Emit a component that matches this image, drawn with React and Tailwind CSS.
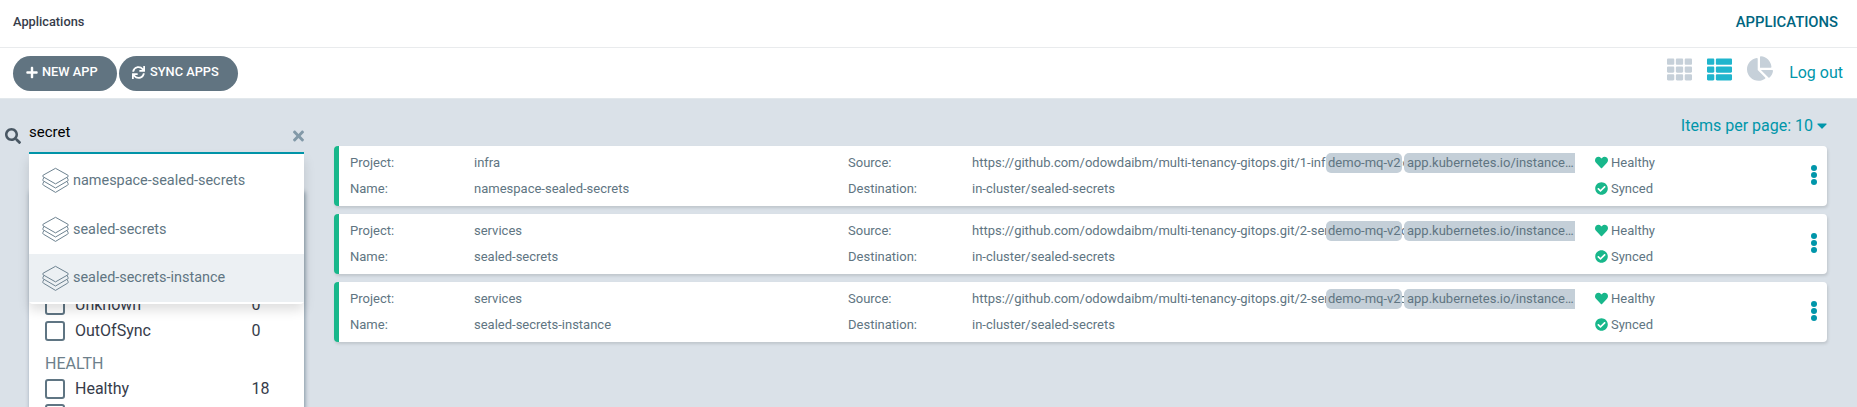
import React from "react";
import {
  FaPlus,
  FaSync,
  FaTh,
  FaThList,
  FaChartPie,
  FaSearch,
  FaTimes,
  FaHeart,
  FaCheckCircle,
  FaCaretDown,
} from "react-icons/fa";

const APPS = [
  { project: "infra", name: "namespace-sealed-secrets", path: "1-infra/namespaces" },
  { project: "services", name: "sealed-secrets", path: "2-services/operators" },
  { project: "services", name: "sealed-secrets-instance", path: "2-services/instances" },
];

function LayersIcon() {
  return (
    <svg className="h-[27px] w-[28px] shrink-0" viewBox="0 0 28 27" fill="none" stroke="#6d8290" strokeWidth="1" strokeLinejoin="round">
      <path d="M13.5 1.3 25.9 8.2Q26.7 9 25.9 9.8L13.5 16.9 1.1 9.8Q0.3 9 1.1 8.2Z" />
      <path d="M1.9 10.4 0.9 12.6Q0.5 13.4 1.3 13.9L13.5 21 25.7 13.9Q26.5 13.4 26.1 12.6L25.1 10.4" />
      <path d="M1.9 14.4 0.9 16.6Q0.5 17.6 1.3 18.1L13.5 25.4 25.7 18.1Q26.5 17.6 26.1 16.6L25.1 14.4" />
    </svg>
  );
}

function Checkbox() {
  return <span className="h-5 w-5 shrink-0 rounded-[3px] border-2 border-[#5f7583]" />;
}

function FilterRow({ label, count }) {
  return (
    <div className="flex h-[25.5px] items-center text-base text-[#363c4a]">
      <Checkbox />
      <span className="ml-[10px] w-[176.5px]">{label}</span>
      <span>{count}</span>
    </div>
  );
}

function AppRow({ app }) {
  return (
    <div className="flex h-[60px] rounded-[4px] border-l-[5px] border-[#18b78b] bg-white pl-[11px] text-[13px] leading-[26px] text-[#607582] shadow-[1px_2px_3px_rgba(0,0,0,0.12)]">
      <div className="w-[124px] pt-1">
        <div>Project:</div>
        <div>Name:</div>
      </div>
      <div className="w-[374px] pt-1">
        <div>{app.project}</div>
        <div>{app.name}</div>
      </div>
      <div className="w-[124px] pt-1">
        <div>Source:</div>
        <div>Destination:</div>
      </div>
      <div className="w-[603px] pt-1">
        <div className="relative">
          <div className="overflow-hidden whitespace-nowrap">
            https://github.com/odowdaibm/multi-tenancy-gitops.git/{app.path}
          </div>
          <div className="absolute top-[3px] right-0 flex gap-[2px] leading-5">
            <span className="w-[76px] rounded-[5px] bg-[#c4cfd8] pl-[2px] whitespace-nowrap">demo-mq-v2</span>
            <span className="w-[171px] rounded-l-[5px] bg-[#c4cfd8] pl-[3px] whitespace-nowrap">app.kubernetes.io/instance…</span>
          </div>
        </div>
        <div>in-cluster/sealed-secrets</div>
      </div>
      <div className="ml-5 flex-1 pt-1">
        <div className="flex items-center gap-[3px]">
          <FaHeart className="mb-px h-[13px] w-[13px] text-[#18b78b]" />
          Healthy
        </div>
        <div className="flex items-center gap-[3px]">
          <FaCheckCircle className="mb-px h-[13px] w-[13px] text-[#18b78b]" />
          Synced
        </div>
      </div>
      <div className="w-[16px] pt-[18.5px]">
        <svg className="h-5 w-[6px]" viewBox="0 0 6 20" fill="#0096aa">
          <circle cx="3" cy="3" r="3" />
          <circle cx="3" cy="10" r="3" />
          <circle cx="3" cy="17" r="3" />
        </svg>
      </div>
    </div>
  );
}

export default function App() {
  return (
    <div className="h-[407px] overflow-hidden bg-[#dae1e8] font-[Roboto,sans-serif]">
      <header className="flex h-12 items-center justify-between border-b border-[#e9ebed] bg-white pr-[19px] pb-[3px] pl-[13px] font-medium">
        <span className="text-[12.8px] text-[#363c4a]">Applications</span>
        <span className="text-[14.8px] text-[#006580]">APPLICATIONS</span>
      </header>

      <div className="flex h-[51px] items-center justify-between border-b border-[#e2e8ec] bg-white pr-[14px] pl-[13px]">
        <div className="flex gap-[2px] text-[12.8px] font-medium text-white">
          <button className="flex h-[35px] w-[104px] items-center rounded-full bg-[#617481] pb-[2px] pl-[13px]">
            <FaPlus className="mr-[4px] h-[13px] w-[12px]" />
            NEW APP
          </button>
          <button className="flex h-[35px] w-[119px] items-center rounded-full bg-[#617481] pb-[2px] pl-[13px]">
            <FaSync className="mr-[5px] h-[13px] w-[13px]" />
            SYNC APPS
          </button>
        </div>
        <div className="flex items-center text-base text-[#0096aa]">
          <FaTh className="mr-[15px] mb-[8px] h-[25px] w-[25px] text-[#c6d0d9]" />
          <FaThList className="mr-[15px] mb-[8px] h-[25px] w-[25px] text-[#1fb5cd]" />
          <FaChartPie className="mr-4 mb-[9px] h-[25px] w-[26px] text-[#c6d0d9]" />
          Log out
        </div>
      </div>

      <div className="flex">
        <aside className="relative w-[305px]">
          <div className="flex h-[55px] items-start pl-[5px]">
            <FaSearch className="mt-[29px] h-4 w-4 text-[#495763]" />
            <div className="ml-2 flex h-[55px] w-[275px] justify-between border-b-2 border-[#0096aa]">
              <span className="pt-[23px] text-[15px] leading-5 text-black">secret</span>
              <FaTimes className="mt-[29px] h-[16px] w-[11px] text-[#8299a8]" preserveAspectRatio="none" />
            </div>
          </div>
          <div className="mt-[35px] ml-[29px] h-[260px] w-[275px] rounded-[4px] bg-white pt-[103.5px] pl-4 shadow-[1px_2px_4px_rgba(40,70,90,0.5)]">
            <FilterRow label="Unknown" count="0" />
            <FilterRow label="OutOfSync" count="0" />
            <div className="flex h-[32.5px] items-center pt-[8px] text-base text-[#6d7f8b]">HEALTH</div>
            <FilterRow label="Healthy" count="18" />
            <FilterRow label="Unknown" count="1" />
          </div>
          <div className="absolute top-[55px] left-[29px] w-[275px] rounded-b-[4px] bg-white pt-[2px] pb-[2px] shadow-[0_6px_12px_rgba(0,0,0,0.13)]">
            {APPS.map((app, i) => (
              <div
                key={app.name}
                className={
                  "flex items-center pl-[13px] text-[14.45px] leading-5 text-[#607582] " +
                  (i === 2 ? "h-[48px] bg-[#ecf0f3]" : "h-[49px]")
                }
              >
                <LayersIcon />
                <span className="ml-[3px]">{app.name}</span>
              </div>
            ))}
          </div>
        </aside>

        <main className="ml-[29px] w-[1493px]">
          <div className="flex h-[47px] items-center justify-end gap-[4px] pt-[6px] text-base text-[#0096aa]">
            Items per page: 10
            <FaCaretDown className="h-[17px] w-[10px]" />
          </div>
          <div className="flex flex-col gap-2">
            {APPS.map((app) => (
              <AppRow key={app.name} app={app} />
            ))}
          </div>
        </main>
      </div>
    </div>
  );
}
